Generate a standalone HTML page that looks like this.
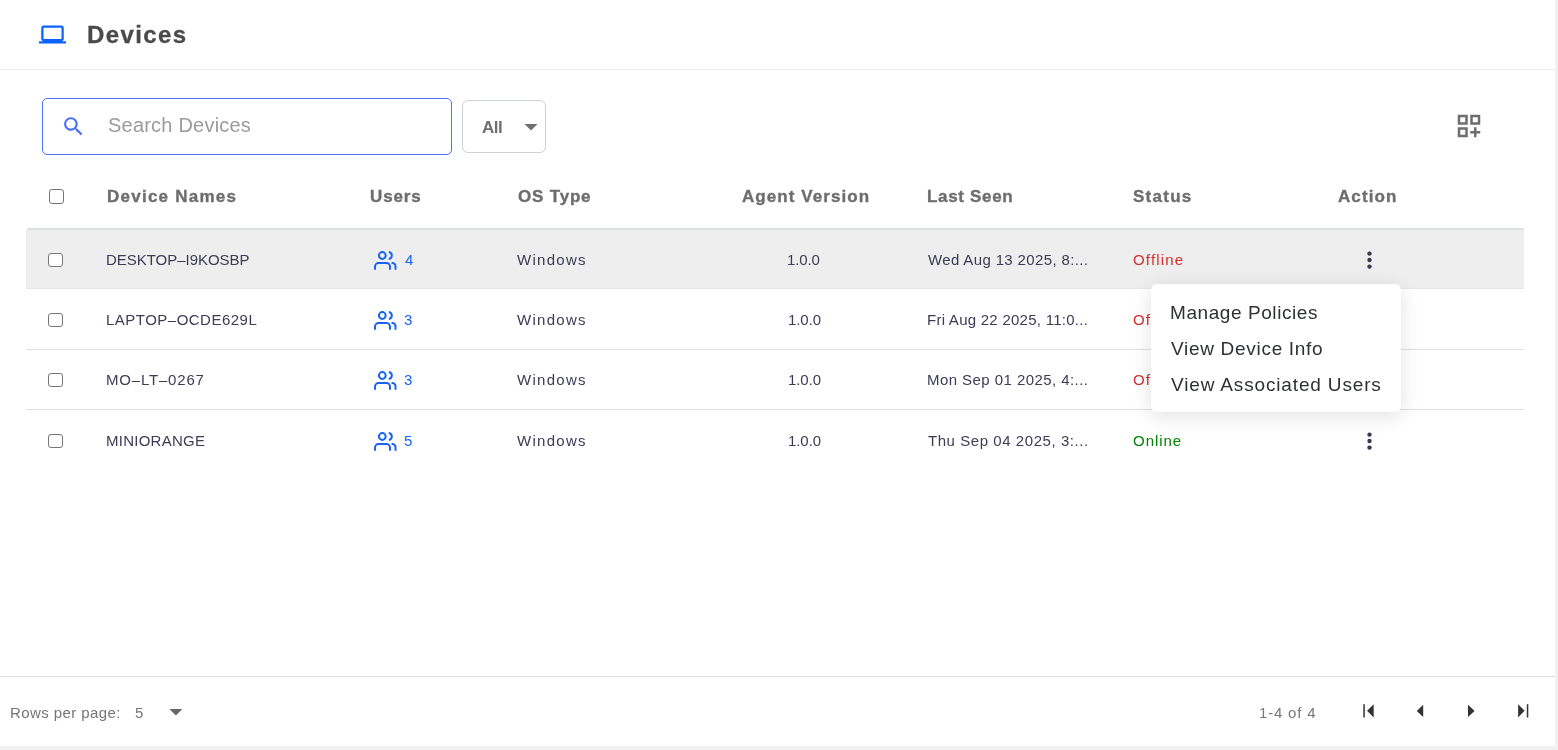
<!DOCTYPE html>
<html>
<head>
<meta charset="utf-8">
<style>
html,body{margin:0;padding:0;}
body{width:1558px;height:750px;overflow:hidden;background:#f1f1f1;position:relative;font-family:"Liberation Sans",sans-serif;}
.panel{position:absolute;left:0;top:0;width:1555px;height:746px;background:#fff;}
.abs{position:absolute;white-space:nowrap;}
.t{position:absolute;white-space:nowrap;line-height:1;will-change:transform;}
.hline{position:absolute;height:1px;}
.cb{position:absolute;width:12.6px;height:12.6px;border:1.3px solid #767676;border-radius:3px;background:#fff;}
</style>
</head>
<body>
<div class="panel">

<svg class="abs" style="left:39px;top:20.9px" width="27" height="27" viewBox="0 0 24 24"><path fill="#0a63ff" d="M20 18c1.1 0 1.99-.9 1.99-2L22 6c0-1.1-.9-2-2-2H4c-1.1 0-2 .9-2 2v10c0 1.1.9 2 2 2H0v2h24v-2h-4zM4 6h16v10H4V6z"/></svg>
<div class="t" style="left:86.64px;top:23.08px;font-size:24px;font-weight:700;color:#4a4a4a;letter-spacing:1.404px;-webkit-text-stroke:0.3px #4a4a4a">Devices</div>
<div class="hline" style="left:0;top:69px;width:1555px;background:#ededed"></div>
<div class="abs" style="left:42px;top:98px;width:408px;height:55px;border:1px solid #4f72f5;border-radius:5px"></div>
<svg class="abs" style="left:61px;top:114px" width="25" height="25" viewBox="0 0 24 24"><path fill="#4a6ff7" d="M15.5 14h-.79l-.28-.27C15.41 12.59 16 11.110 16 9.5 16 5.91 13.09 3 9.5 3S3 5.91 3 9.5 5.91 16 9.5 16c1.61 0 3.09-.59 4.23-1.57l.27.28v.79l5 4.99L20.49 19l-4.99-5zm-6 0C7.01 14 5 11.99 5 9.5S7.01 5 9.5 5 14 7.01 14 9.5 11.99 14 9.5 14z"/></svg>
<div class="t" style="left:108.46px;top:115.17px;font-size:20px;font-weight:400;color:#9b9b9b;letter-spacing:0.214px">Search Devices</div>
<div class="abs" style="left:462px;top:100px;width:82px;height:51px;border:1px solid #cdd1d8;border-radius:6px"></div>
<div class="t" style="left:481.61px;top:118.81px;font-size:17px;font-weight:700;color:#6f6f6f;letter-spacing:-0.490px">All</div>
<svg class="abs" style="left:524px;top:124px" width="14" height="7" viewBox="0 0 14 7"><path fill="#707070" d="M0.5 0H13.5L7 6.5Z"/></svg>
<svg class="abs" style="left:1454.4px;top:111.4px" width="30" height="30" viewBox="0 0 24 24"><path fill="#6e6e6e" fill-rule="evenodd" d="M3 11h8V3H3v8zm2-6h4v4H5V5zm8-2v8h8V3h-8zm6 6h-4V5h4v4zM3 21h8v-8H3v8zm2-6h4v4H5v-4zm13-2h-2v3h-3v2h3v3h2v-3h3v-2h-3z"/></svg>
<div class="cb" style="left:49px;top:189px"></div>
<div class="t" style="left:106.93px;top:188.11px;font-size:17px;font-weight:700;color:#6d6d6d;letter-spacing:1.247px;-webkit-text-stroke:0.35px #6d6d6d">Device Names</div>
<div class="t" style="left:369.68px;top:188.11px;font-size:17px;font-weight:700;color:#6d6d6d;letter-spacing:0.891px;-webkit-text-stroke:0.35px #6d6d6d">Users</div>
<div class="t" style="left:517.95px;top:188.11px;font-size:17px;font-weight:700;color:#6d6d6d;letter-spacing:0.806px;-webkit-text-stroke:0.35px #6d6d6d">OS Type</div>
<div class="t" style="left:741.73px;top:188.11px;font-size:17px;font-weight:700;color:#6d6d6d;letter-spacing:1.060px;-webkit-text-stroke:0.35px #6d6d6d">Agent Version</div>
<div class="t" style="left:927.13px;top:188.11px;font-size:17px;font-weight:700;color:#6d6d6d;letter-spacing:0.672px;-webkit-text-stroke:0.35px #6d6d6d">Last Seen</div>
<div class="t" style="left:1132.94px;top:188.11px;font-size:17px;font-weight:700;color:#6d6d6d;letter-spacing:1.264px;-webkit-text-stroke:0.35px #6d6d6d">Status</div>
<div class="t" style="left:1338.21px;top:188.11px;font-size:17px;font-weight:700;color:#6d6d6d;letter-spacing:1.081px;-webkit-text-stroke:0.35px #6d6d6d">Action</div>
<div class="hline" style="left:27px;top:228px;width:1497px;height:2px;background:#dcdfe3"></div>
<div class="abs" style="left:26px;top:230px;width:1498px;height:58px;background:#eeeeee;border-bottom:1px solid #e7e7e7"></div>
<div class="hline" style="left:26px;top:349px;width:1498px;background:#e0e0e0"></div>
<div class="hline" style="left:26px;top:409px;width:1498px;background:#e0e0e0"></div>
<div class="cb" style="left:48px;top:252.60px"></div>
<div class="t" style="left:105.94px;top:252.30px;font-size:15px;font-weight:400;color:#3d3b55;letter-spacing:-0.028px">DESKTOP–I9KOSBP</div>
<div class="t" style="left:404.73px;top:252.30px;font-size:15px;font-weight:400;color:#1a62f5;letter-spacing:0.000px">4</div>
<div class="t" style="left:516.84px;top:252.30px;font-size:15px;font-weight:400;color:#3d3b55;letter-spacing:1.292px">Windows</div>
<div class="t" style="left:787.28px;top:252.30px;font-size:15px;font-weight:400;color:#3d3b55;letter-spacing:-0.115px">1.0.0</div>
<div class="t" style="left:927.72px;top:252.30px;font-size:15px;font-weight:400;color:#3d3b55;letter-spacing:0.362px">Wed Aug 13 2025, 8:...</div>
<div class="t" style="left:1133.15px;top:252.30px;font-size:15px;font-weight:400;color:#d32f2f;letter-spacing:1.178px">Offline</div>
<svg class="abs" style="left:373px;top:250.00px" width="24" height="21" viewBox="0 0 24 21"><g fill="none" stroke="#1a62f5" stroke-width="2"><circle cx="9.3" cy="5.5" r="3.4"/><path d="M15.8 2A3.54 3.54 0 0 1 15.8 9"/><path stroke-linecap="round" d="M2 19V16.6A3.5 3.5 0 0 1 5.5 13.1H13.5A3.5 3.5 0 0 1 17 16.6V19"/><path stroke-linecap="round" d="M19.3 13.1A3.2 3.2 0 0 1 22.5 16.3V19"/></g></svg>
<svg class="abs" style="left:1362px;top:247.80px" width="15" height="24" viewBox="0 0 15 24"><g fill="#3a3953"><circle cx="7.5" cy="5.6" r="2.2"/><circle cx="7.5" cy="12" r="2.2"/><circle cx="7.5" cy="18.6" r="2.2"/></g></svg>
<div class="cb" style="left:48px;top:312.60px"></div>
<div class="t" style="left:105.94px;top:312.30px;font-size:15px;font-weight:400;color:#3d3b55;letter-spacing:0.485px">LAPTOP–OCDE629L</div>
<div class="t" style="left:404.10px;top:312.30px;font-size:15px;font-weight:400;color:#1a62f5;letter-spacing:0.000px">3</div>
<div class="t" style="left:516.86px;top:312.30px;font-size:15px;font-weight:400;color:#3d3b55;letter-spacing:1.292px">Windows</div>
<div class="t" style="left:787.87px;top:312.30px;font-size:15px;font-weight:400;color:#3d3b55;letter-spacing:-0.075px">1.0.0</div>
<div class="t" style="left:926.71px;top:312.30px;font-size:15px;font-weight:400;color:#3d3b55;letter-spacing:0.260px">Fri Aug 22 2025, 11:0...</div>
<div class="t" style="left:1133.15px;top:312.30px;font-size:15px;font-weight:400;color:#d32f2f;letter-spacing:1.178px">Offline</div>
<svg class="abs" style="left:373px;top:310.00px" width="24" height="21" viewBox="0 0 24 21"><g fill="none" stroke="#1a62f5" stroke-width="2"><circle cx="9.3" cy="5.5" r="3.4"/><path d="M15.8 2A3.54 3.54 0 0 1 15.8 9"/><path stroke-linecap="round" d="M2 19V16.6A3.5 3.5 0 0 1 5.5 13.1H13.5A3.5 3.5 0 0 1 17 16.6V19"/><path stroke-linecap="round" d="M19.3 13.1A3.2 3.2 0 0 1 22.5 16.3V19"/></g></svg>
<div class="cb" style="left:48px;top:372.60px"></div>
<div class="t" style="left:105.94px;top:372.30px;font-size:15px;font-weight:400;color:#3d3b55;letter-spacing:0.810px">MO–LT–0267</div>
<div class="t" style="left:404.10px;top:372.30px;font-size:15px;font-weight:400;color:#1a62f5;letter-spacing:0.000px">3</div>
<div class="t" style="left:516.86px;top:372.30px;font-size:15px;font-weight:400;color:#3d3b55;letter-spacing:1.292px">Windows</div>
<div class="t" style="left:787.87px;top:372.30px;font-size:15px;font-weight:400;color:#3d3b55;letter-spacing:-0.075px">1.0.0</div>
<div class="t" style="left:926.71px;top:372.30px;font-size:15px;font-weight:400;color:#3d3b55;letter-spacing:0.439px">Mon Sep 01 2025, 4:...</div>
<div class="t" style="left:1133.15px;top:372.30px;font-size:15px;font-weight:400;color:#d32f2f;letter-spacing:1.178px">Offline</div>
<svg class="abs" style="left:373px;top:370.00px" width="24" height="21" viewBox="0 0 24 21"><g fill="none" stroke="#1a62f5" stroke-width="2"><circle cx="9.3" cy="5.5" r="3.4"/><path d="M15.8 2A3.54 3.54 0 0 1 15.8 9"/><path stroke-linecap="round" d="M2 19V16.6A3.5 3.5 0 0 1 5.5 13.1H13.5A3.5 3.5 0 0 1 17 16.6V19"/><path stroke-linecap="round" d="M19.3 13.1A3.2 3.2 0 0 1 22.5 16.3V19"/></g></svg>
<div class="cb" style="left:48px;top:433.60px"></div>
<div class="t" style="left:105.94px;top:433.30px;font-size:15px;font-weight:400;color:#3d3b55;letter-spacing:0.258px">MINIORANGE</div>
<div class="t" style="left:403.70px;top:433.30px;font-size:15px;font-weight:400;color:#1a62f5;letter-spacing:0.000px">5</div>
<div class="t" style="left:516.86px;top:433.30px;font-size:15px;font-weight:400;color:#3d3b55;letter-spacing:1.292px">Windows</div>
<div class="t" style="left:787.87px;top:433.30px;font-size:15px;font-weight:400;color:#3d3b55;letter-spacing:-0.075px">1.0.0</div>
<div class="t" style="left:927.93px;top:433.30px;font-size:15px;font-weight:400;color:#3d3b55;letter-spacing:0.556px">Thu Sep 04 2025, 3:...</div>
<div class="t" style="left:1133.37px;top:433.30px;font-size:15px;font-weight:400;color:#008000;letter-spacing:0.968px">Online</div>
<svg class="abs" style="left:373px;top:431.00px" width="24" height="21" viewBox="0 0 24 21"><g fill="none" stroke="#1a62f5" stroke-width="2"><circle cx="9.3" cy="5.5" r="3.4"/><path d="M15.8 2A3.54 3.54 0 0 1 15.8 9"/><path stroke-linecap="round" d="M2 19V16.6A3.5 3.5 0 0 1 5.5 13.1H13.5A3.5 3.5 0 0 1 17 16.6V19"/><path stroke-linecap="round" d="M19.3 13.1A3.2 3.2 0 0 1 22.5 16.3V19"/></g></svg>
<svg class="abs" style="left:1362px;top:428.80px" width="15" height="24" viewBox="0 0 15 24"><g fill="#3a3953"><circle cx="7.5" cy="5.6" r="2.2"/><circle cx="7.5" cy="12" r="2.2"/><circle cx="7.5" cy="18.6" r="2.2"/></g></svg>
<div class="abs" style="left:1151px;top:284px;width:250px;height:128px;background:#fff;border-radius:6px;box-shadow:0px 4px 20px rgba(0,0,0,0.12)"></div>
<div class="t" style="left:1170.04px;top:302.82px;font-size:19px;font-weight:400;color:#2e3033;letter-spacing:0.574px">Manage Policies</div>
<div class="t" style="left:1171.27px;top:338.72px;font-size:19px;font-weight:400;color:#2e3033;letter-spacing:0.700px">View Device Info</div>
<div class="t" style="left:1171.27px;top:374.72px;font-size:19px;font-weight:400;color:#2e3033;letter-spacing:0.847px">View Associated Users</div>
<div class="hline" style="left:0;top:676px;width:1555px;background:#e0e0e0"></div>
<div class="t" style="left:9.72px;top:705.10px;font-size:15px;font-weight:400;color:#757575;letter-spacing:0.415px">Rows per page:</div>
<div class="t" style="left:134.57px;top:705.10px;font-size:15px;font-weight:400;color:#757575;letter-spacing:0.000px">5</div>
<svg class="abs" style="left:169px;top:709px" width="14" height="7" viewBox="0 0 14 7"><path fill="#686868" d="M0.4 0H13.4L6.9 6.5Z"/></svg>
<div class="t" style="left:1258.72px;top:705.10px;font-size:15px;font-weight:400;color:#777777;letter-spacing:0.801px">1-4 of 4</div>
<svg class="abs" style="left:1360px;top:702px" width="172" height="18" viewBox="0 0 172 18"><g fill="#333">
<rect x="3.3" y="2.2" width="1.5" height="13.3"/><path d="M7.1 8.85L13.7 2.2V15.5Z"/>
<path d="M56.8 8.9L63.2 2.8V15Z"/>
<path d="M114.6 8.9L108 2.8V15Z"/>
<path d="M164.6 8.85L158.1 2.2V15.5Z"/><rect x="166.8" y="2.2" width="1.5" height="13.3"/>
</g></svg>
</div>
</body>
</html>
